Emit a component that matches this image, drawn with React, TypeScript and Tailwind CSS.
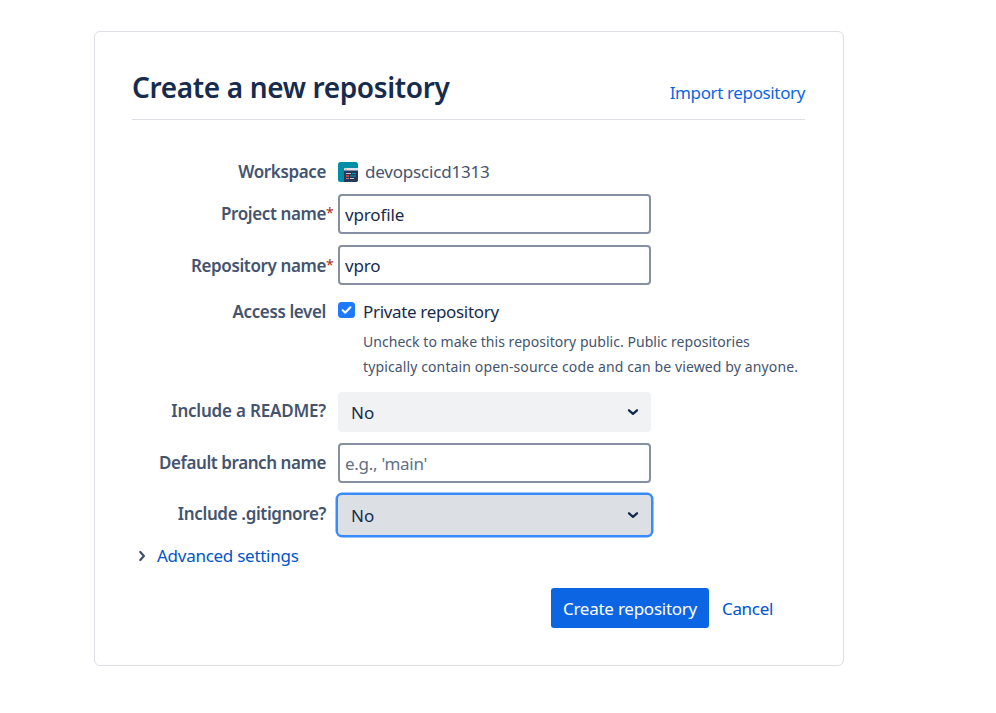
import type { ReactNode } from "react";

function Chevron({ className }: { className: string }) {
  return (
    <svg className={className} viewBox="0 0 12 12" fill="none" stroke="currentColor" strokeWidth="2.3" strokeLinecap="round" strokeLinejoin="round">
      <path d="M2 4.3 6 7.9 10 4.3" />
    </svg>
  );
}

function Label({ children, required, className = "tracking-[-0.38px]" }: { children: ReactNode; required?: boolean; className?: string }) {
  return (
    <label className={"relative mr-3 flex h-6 w-[194px] shrink-0 justify-end whitespace-nowrap text-[17px] leading-6 font-semibold text-[#44546f] " + className}>
      <span>{children}</span>
      {required && <span className="absolute -top-px left-full text-[14px] font-normal text-[#ae2a19]">*</span>}
    </label>
  );
}

function TextInput({ value, placeholder }: { value?: string; placeholder?: string }) {
  return (
    <div className="h-10 w-[313px] rounded-[4px] border-2 border-[#8590a2] pt-[7px] pl-[5px] text-[17px] leading-6">
      {value ? <span className="tracking-[-0.15px] text-[#172b4d]">{value}</span> : <span className="tracking-[-0.28px] text-[#626f86]">{placeholder}</span>}
    </div>
  );
}

function Select({ focused }: { focused?: boolean }) {
  return (
    <div className={"flex h-10 w-[313px] items-center justify-between rounded-[4px] pr-3 pl-[13px] text-[17px] text-[#172b4d] " + (focused ? "bg-[#dcdfe4] ring-[2.5px] ring-[#388bff]" : "bg-[#f1f2f4]")}>
      <span className="pt-px">No</span>
      <Chevron className="size-3" />
    </div>
  );
}

function Avatar() {
  return (
    <svg className="size-5 shrink-0" viewBox="0 0 20 20">
      <rect width="20" height="20" rx="2.5" fill="#008da6" />
      <path d="M6 7h14v10.5a2.5 2.5 0 0 1-2.5 2.5H6z" fill="#253858" />
      <path d="M6 7a1 1 0 0 1 1-1h13v2.5H6z" fill="#dfe4ec" />
      <path d="M7 7.3h2" stroke="#ff9c85" />
      <path d="M8 11.5h5M12 16.5h4" stroke="#c1c7d0" />
      <path d="M14 11.5h4M12 14h6" stroke="#00a3bf" />
      <path d="M8 14h3" stroke="#ff5630" strokeWidth="1.3" />
      <path d="M8 16.5h3" stroke="#de6a6a" />
    </svg>
  );
}

export default function App() {
  return (
    <div className="h-[713px] bg-white pt-[31px] pl-[94px] font-['Noto_Sans',sans-serif]">
      <main className="h-[635px] w-[750px] rounded-[6px] border border-[#dcdfe4] pr-[38px] pl-[37px]">
        <header className="flex h-[88px] items-start justify-between border-b border-[#dcdfe4]">
          <h1 className="mt-[35px] text-[28px] leading-10 font-semibold tracking-[-0.36px] whitespace-nowrap text-[#172b4d]">Create a new repository</h1>
          <a className="mt-[49px] text-[17px] leading-6 tracking-[-0.37px] whitespace-nowrap text-[#0c66e4]">Import repository</a>
        </header>
        <form>
          <div className="mt-[40px] flex h-6 items-center">
            <Label>Workspace</Label>
            <Avatar />
            <span className="ml-[7px] text-[17px] leading-6 tracking-[-0.2px] text-[#44546f]">devopscicd1313</span>
          </div>
          <div className="mt-[10px] flex">
            <Label required className="mt-[8px] tracking-[-0.38px]">Project name</Label>
            <TextInput value="vprofile" />
          </div>
          <div className="mt-[11px] flex">
            <Label required className="mt-[9px] tracking-[-0.38px]">Repository name</Label>
            <TextInput value="vpro" />
          </div>
          <div className="mt-[15px] flex h-[92px]">
            <Label>Access level</Label>
            <div>
              <div className="flex h-6">
                <svg className="mt-[2px] h-4 w-[17px]" viewBox="0 0 17 16">
                  <rect width="17" height="16" rx="3.5" fill="#1d7afc" />
                  <path d="m4.7 8.3 2.5 2.4 5.2-5.4" fill="none" stroke="#fff" strokeWidth="2" strokeLinecap="round" strokeLinejoin="round" />
                </svg>
                <span className="ml-2 text-[17px] leading-6 tracking-[-0.33px] text-[#172b4d]">Private repository</span>
              </div>
              <p className="mt-[5px] ml-[25px] text-[14px] leading-[25px] whitespace-nowrap text-[#44546f]">
                <span className="tracking-[0.04px]">Uncheck to make this repository public. Public repositories</span>
                <br />
                <span className="tracking-[0.12px]">typically contain open-source code and can be viewed by anyone.</span>
              </p>
            </div>
          </div>
          <div className="flex">
            <Label className="mt-[7px] tracking-[-0.2px]">Include a README?</Label>
            <Select />
          </div>
          <div className="mt-[11px] flex">
            <Label className="mt-[8px] tracking-[-0.42px]">Default branch name</Label>
            <TextInput placeholder="e.g., 'main'" />
          </div>
          <div className="mt-[12px] flex">
            <Label className="mt-[7px] tracking-[-0.36px]">Include .gitignore?</Label>
            <Select focused />
          </div>
          <div className="mt-[9px] flex h-6 items-center">
            <Chevron className="ml-1 size-3 -rotate-90 text-[#44546f]" />
            <a className="ml-[9px] text-[17px] leading-6 tracking-[-0.27px] text-[#0055cc]">Advanced settings</a>
          </div>
          <div className="mt-5 flex items-center pl-[419px]">
            <div className="flex h-10 w-[158px] items-center justify-center rounded-[3px] bg-[#0c66e4] pt-0.5 text-[17px] tracking-[-0.25px] whitespace-nowrap text-white">Create repository</div>
            <a className="ml-[13px] pt-0.5 text-[17px] tracking-[-0.33px] text-[#0055cc]">Cancel</a>
          </div>
        </form>
      </main>
    </div>
  );
}
